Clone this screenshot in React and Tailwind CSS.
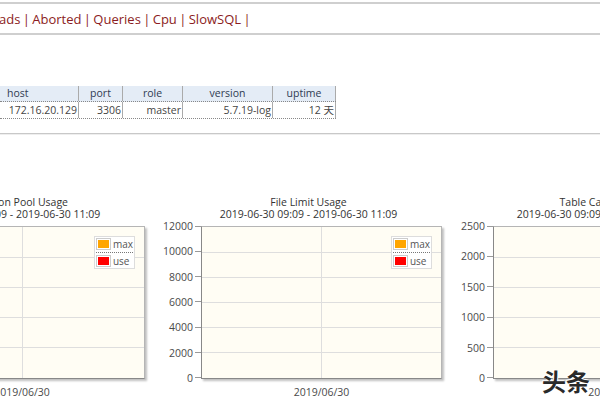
import React from "react";

const charts = [
  {
    title: "Connection Pool Usage",
    prefix: "w-[36px]",
    plot: "w-[246px]",
    labels: ["1000", "800", "600", "400", "200", "0"],
  },
  {
    title: "File Limit Usage",
    prefix: "w-[41px]",
    plot: "w-[241px]",
    labels: ["12000", "10000", "8000", "6000", "4000", "2000", "0"],
  },
  {
    title: "Table Cache Usage",
    prefix: "w-[36px]",
    plot: "w-[246px]",
    labels: ["2500", "2000", "1500", "1000", "500", "0"],
  },
];

const cols = [
  { name: "host", w: "w-[79px]", head: "text-left pl-[7px]", val: "172.16.20.129" },
  { name: "port", w: "w-[44px]", head: "text-center", val: "3306" },
  { name: "role", w: "w-[60px]", head: "text-center", val: "master" },
  { name: "version", w: "w-[90px]", head: "text-center", val: "5.7.19-log" },
  { name: "uptime", w: "w-[63px]", head: "text-center", val: "12 天" },
];

const LegendSwatch = ({ color }) => (
  <span className="border border-[#ccc] p-[1px] bg-white">
    <span className="block w-[11px] h-[8px]" style={{ background: color }} />
  </span>
);

const Chart = ({ chart }) => {
  const n = chart.labels.length - 1;
  const lines = [];
  for (let i = 1; i < n; i++) lines.push((i / n) * 100);
  return (
    <div className="w-[297px] shrink-0 flex flex-col">
      <div className="text-center text-[10.5px] leading-[12px] text-[#333]">{chart.title}</div>
      <div className="text-center text-[10.5px] leading-[12px] text-[#333]">
        2019-06-30 09:09 - 2019-06-30 11:09
      </div>
      <div className="flex items-start mt-[6px]">
        <div className={`${chart.prefix} shrink-0 -mt-[6px] h-[164px] flex flex-col justify-between`}>
          {chart.labels.map((l) => (
            <div key={l} className="h-[12px] flex items-center justify-end text-[10.5px] leading-[12px] text-[#4a4a4a]">
              <span>{l}</span>
              <span className="ml-[2px] w-[6px] h-px bg-[#999]" />
            </div>
          ))}
        </div>
        <div className={`${chart.plot} shrink-0 flex flex-col`}>
          <div className="relative h-[153px] bg-[#fffdf4] border border-[#b5b5b5] border-l-[#888] border-b-[#888] shadow-[2px_2px_2px_rgba(0,0,0,0.25)]">
            <svg className="absolute inset-0 w-full h-full" shapeRendering="crispEdges">
              {lines.map((p) => (
                <line key={p} x1="0" x2="100%" y1={`${p}%`} y2={`${p}%`} stroke="#dedede" strokeWidth="1" />
              ))}
              <line x1="50%" x2="50%" y1="0" y2="100%" stroke="#dedede" strokeWidth="1" />
            </svg>
            <div className="absolute top-[9px] right-[9px] bg-white border border-[#ddd] px-px py-px text-[10px] leading-[12px] text-[#545454]">
              <div className="flex items-center gap-[2px] pb-[2px] border-b border-dotted border-[#777]">
                <LegendSwatch color="#ffa500" />
                <span>max</span>
              </div>
              <div className="flex items-center gap-[2px] pt-[2px]">
                <LegendSwatch color="#ff0000" />
                <span>use</span>
              </div>
            </div>
          </div>
          <div className="mt-[7px] text-center text-[10.5px] leading-[12px] text-[#4a4a4a]">2019/06/30</div>
        </div>
      </div>
    </div>
  );
};

export default function App() {
  return (
    <div className="relative w-[600px] h-[400px] overflow-hidden bg-white font-['Open_Sans',sans-serif]">
      <div className="mt-[2px] h-[33px] border-y-2 border-[#cfcfcf] flex items-center text-[13px] text-[#8b1c22] whitespace-nowrap [word-spacing:-1px]">
        <span className="-ml-px mt-[2px]">ads | Aborted | Queries | Cpu | SlowSQL |</span>
      </div>

      <div className="mt-[51px] w-[336px] text-[10.5px]">
        <div className="flex h-[16px] bg-[#e4ecf6] border-b border-dotted border-[#888] text-[#2f3b52] leading-[15px]">
          {cols.map((c) => (
            <div key={c.name} className={`${c.w} ${c.head} border-r border-[#aaa]`}>
              {c.name}
            </div>
          ))}
        </div>
        <div className="flex h-[17px] border-b border-dotted border-[#888] text-[#444] leading-[16px]">
          {cols.map((c) => (
            <div key={c.name} className={`${c.w} text-right pr-px border-r border-[#aaa] font-['Open_Sans','Noto_Sans_CJK_SC',sans-serif]`}>
              {c.val}
            </div>
          ))}
        </div>
      </div>

      <div className="mt-[14px] h-[2px] border-t border-[#c8c8c8] bg-[#eeeeee]" />

      <div className="mt-[61px] -ml-[137px] flex">
        {charts.map((c) => (
          <Chart key={c.title} chart={c} />
        ))}
      </div>

      <div className="absolute right-[10px] bottom-[6px] text-[24px] leading-[26px] font-bold text-[#2a2a2a] font-['Noto_Sans_CJK_SC',sans-serif] [text-shadow:1px_1px_0_#fff,-1px_-1px_0_#fff]">
        头条
      </div>
    </div>
  );
}
